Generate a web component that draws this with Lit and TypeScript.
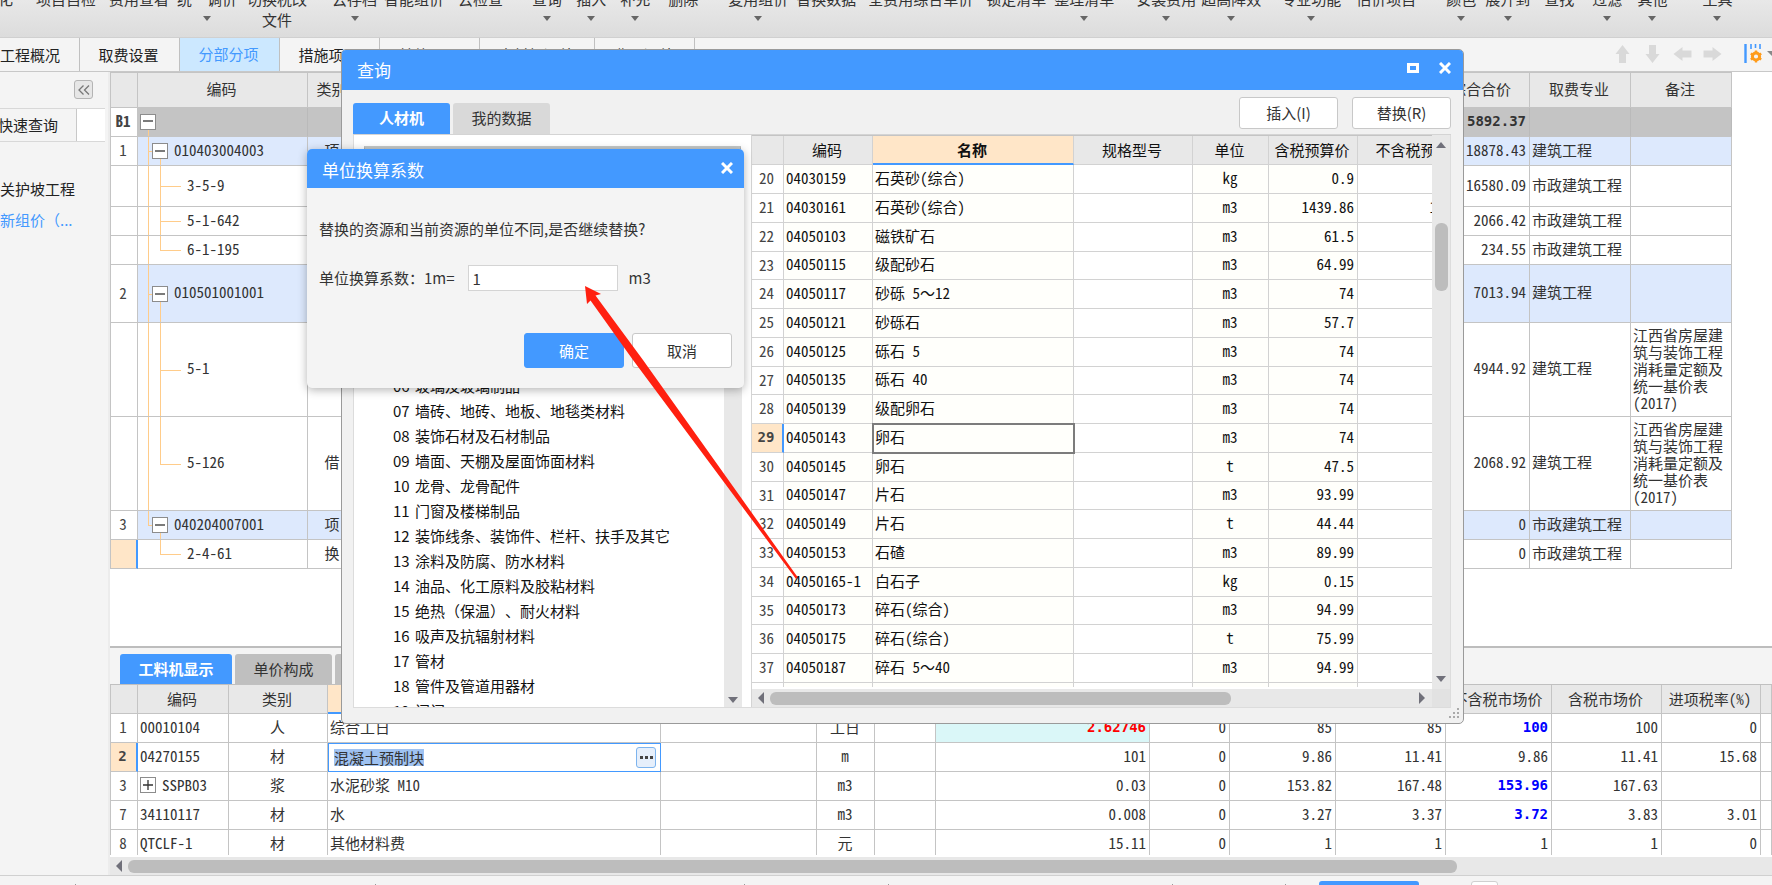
import { LitElement, html, css, svg, nothing } from "lit";
import { customElement, state } from "lit/decorators.js";
import { classMap } from "lit/directives/class-map.js";
import { styleMap } from "lit/directives/style-map.js";

interface Tool { label: string; gap: number; menu?: boolean; wrap?: boolean; }

const TOOLS: Tool[] = [
  { label: "化", gap: 0 },
  { label: "项目自检", gap: 23 },
  { label: "费用查看", gap: 13 },
  { label: "统一调价", gap: 8, menu: true },
  { label: "切换税改文件", gap: 10, wrap: true },
  { label: "云存档", gap: 25, menu: true },
  { label: "智能组价", gap: 7 },
  { label: "云检查", gap: 14 },
  { label: "查询", gap: 29, menu: true },
  { label: "插入", gap: 14, menu: true },
  { label: "补充", gap: 14, menu: true },
  { label: "删除", gap: 18 },
  { label: "复用组价", gap: 30, menu: true },
  { label: "替换数据", gap: 8 },
  { label: "全费用综合单价", gap: 12 },
  { label: "锁定清单", gap: 13 },
  { label: "整理清单", gap: 8, menu: true },
  { label: "安装费用", gap: 22, menu: true },
  { label: "超高降效", gap: 5, menu: true },
  { label: "专业功能", gap: 20, menu: true },
  { label: "估价项目", gap: 15 },
  { label: "颜色", gap: 30, menu: true },
  { label: "展开到", gap: 9, menu: true },
  { label: "查找", gap: 14 },
  { label: "过滤", gap: 18, menu: true },
  { label: "其他", gap: 15, menu: true },
  { label: "工具", gap: 35, menu: true },
];

const PAGES = ["工程概况", "取费设置", "分部分项", "措施项目", "其他项目", "人材机汇总", "费用汇总"];

/* Widths of the status bar sections, each closed by a divider. */
const SECTIONS = [76, 300, 369, 144, 284, 113];

interface Bill {
  no: string; code: string; kind: string; total: string; major: string;
  note?: string; level: number; size: string; last?: boolean; current?: boolean;
}

const NOTE = "江西省房屋建筑与装饰工程消耗量定额及统一基价表(2017)";

const BILLS: Bill[] = [
  { no: "B1", code: "", kind: "", total: "5892.37", major: "", level: 0, size: "h29" },
  { no: "1", code: "010403004003", kind: "项", total: "18878.43", major: "建筑工程", level: 1, size: "h29" },
  { no: "", code: "3-5-9", kind: "", total: "16580.09", major: "市政建筑工程", level: 2, size: "h41" },
  { no: "", code: "5-1-642", kind: "", total: "2066.42", major: "市政建筑工程", level: 2, size: "h29" },
  { no: "", code: "6-1-195", kind: "", total: "234.55", major: "市政建筑工程", level: 2, size: "h29", last: true },
  { no: "2", code: "010501001001", kind: "项", total: "7013.94", major: "建筑工程", level: 1, size: "h58" },
  { no: "", code: "5-1", kind: "", total: "4944.92", major: "建筑工程", note: NOTE, level: 2, size: "h94" },
  { no: "", code: "5-126", kind: "借", total: "2068.92", major: "建筑工程", note: NOTE, level: 2, size: "h94", last: true },
  { no: "3", code: "040204007001", kind: "项", total: "0", major: "市政建筑工程", level: 1, size: "h29", last: true },
  { no: "", code: "2-4-61", kind: "换", total: "0", major: "市政建筑工程", level: 2, size: "h29", last: true, current: true },
];

const MATERIALS: string[][] = [
  ["20", "04030159", "石英砂(综合)", "kg", "0.9", ""],
  ["21", "04030161", "石英砂(综合)", "m3", "1439.86", "1274.21"],
  ["22", "04050103", "磁铁矿石", "m3", "61.5", ""],
  ["23", "04050115", "级配砂石", "m3", "64.99", ""],
  ["24", "04050117", "砂砾 5～12", "m3", "74", ""],
  ["25", "04050121", "砂砾石", "m3", "57.7", ""],
  ["26", "04050125", "砾石 5", "m3", "74", ""],
  ["27", "04050135", "砾石 40", "m3", "74", ""],
  ["28", "04050139", "级配卵石", "m3", "74", ""],
  ["29", "04050143", "卵石", "m3", "74", ""],
  ["30", "04050145", "卵石", "t", "47.5", ""],
  ["31", "04050147", "片石", "m3", "93.99", ""],
  ["32", "04050149", "片石", "t", "44.44", ""],
  ["33", "04050153", "石碴", "m3", "89.99", ""],
  ["34", "04050165-1", "白石子", "kg", "0.15", ""],
  ["35", "04050173", "碎石(综合)", "m3", "94.99", ""],
  ["36", "04050175", "碎石(综合)", "t", "75.99", ""],
  ["37", "04050187", "碎石 5～40", "m3", "94.99", ""],
  ["", "", "", "", "", ""],
];

const CATEGORIES = [
  "06 玻璃及玻璃制品",
  "07 墙砖、地砖、地板、地毯类材料",
  "08 装饰石材及石材制品",
  "09 墙面、天棚及屋面饰面材料",
  "10 龙骨、龙骨配件",
  "11 门窗及楼梯制品",
  "12 装饰线条、装饰件、栏杆、扶手及其它",
  "13 涂料及防腐、防水材料",
  "14 油品、化工原料及胶粘材料",
  "15 绝热（保温）、耐火材料",
  "16 吸声及抗辐射材料",
  "17 管材",
  "18 管件及管道用器材",
  "19 阀门",
];

const RESOURCES: string[][] = [
  ["1", "00010104", "人", "综合工日", "工日", "2.62746", "0", "85", "85", "100", "100", "0"],
  ["2", "04270155", "材", "混凝土预制块", "m", "101", "0", "9.86", "11.41", "9.86", "11.41", "15.68"],
  ["3", "SSPB03", "浆", "水泥砂浆 M10", "m3", "0.03", "0", "153.82", "167.48", "153.96", "167.63", ""],
  ["7", "34110117", "材", "水", "m3", "0.008", "0", "3.27", "3.37", "3.72", "3.83", "3.01"],
  ["8", "QTCLF-1", "材", "其他材料费", "元", "15.11", "0", "1", "1", "1", "1", "0"],
];

const tri = (dir: string) => {
  const turn: Record<string, string> = { up: "5,0 10,6 0,6", down: "0,0 10,0 5,6", left: "6,0 6,12 0,6", right: "0,0 6,6 0,12" };
  const tall = dir === "left" || dir === "right";
  return html`<svg width=${tall ? 6 : 10} height=${tall ? 12 : 6} fill="#70707a" aria-hidden="true">${svg`<polygon points=${turn[dir]} />`}</svg>`;
};

@customElement("app-root")
export class AppRoot extends LitElement {
  @state() private factor = "1";

  static styles = css`
    :host {
      display: flex; flex-direction: column; height: 100vh; overflow: hidden; position: relative;
      font: 15px/20px "Noto Sans CJK SC", sans-serif; color: #333; background: #f4f4f4;
      text-spacing-trim: space-all;
    }
    * { box-sizing: border-box; }
    button, input { font: inherit; color: inherit; margin: 0; padding: 0; border: 0; }
    button { background: none; }
    svg { display: block; flex: none; }
    ul { list-style: none; margin: 0; padding: 0; }

    .toolbar {
      flex: none; display: flex; height: 38px; overflow: hidden; white-space: nowrap;
      background: linear-gradient(#e8e8e8, #dcdcdc); border-bottom: 1px solid #d0d0d0;
    }
    .tool { display: flex; flex-direction: column; align-items: center; flex: none; height: 42px; margin-top: -12px; line-height: 21px; }
    .tool:first-child { margin-left: -2px; }
    .tool.wrap { width: 60px; white-space: normal; }
    .tool svg { margin-top: 7px; }

    .pages { flex: none; display: flex; height: 34px; border-bottom: 1px solid #c8c8c8; background: #f4f4f4; }
    .page { flex: none; width: 100px; border-right: 1px solid #c0c0c0; color: #222; padding: 0 2px 0 0; }
    .page:first-child { width: 80px; text-align: left; }
    .page.wide { width: 115px; }
    .page.on { background: #cce8ff; color: #4399ff; padding-bottom: 2px; }
    .moves { margin-left: auto; display: flex; align-items: center; gap: 11px; padding-bottom: 2px; overflow: hidden; }
    .moves button { flex: none; }
    .moves .setup { display: flex; align-items: center; gap: 5px; margin: 0 -5px 0 11px; }

    .main { flex: 1; min-height: 0; display: flex; }
    .side { flex: none; width: 110px; background: #f4f4f4; padding-top: 8px; border-right: 2px solid #ececec; overflow: hidden; white-space: nowrap; }
    .fold { display: flex; align-items: center; justify-content: center; width: 19px; height: 19px; margin: 0 0 9px 74px; border: 1px solid #b4b4b4; border-radius: 3px; background: #e6e6e6; }
    .quick { display: flex; height: 34px; width: 105px; background: #fff; border-top: 1px solid #d8d8d8; border-bottom: 1px solid #d8d8d8; }
    .quick button { width: 79px; text-align: left; background: #f4f4f4; border-right: 1px solid #c8c8c8; color: #222; margin-left: -2px; }
    .outline { padding-top: 32px; color: #222; }
    .outline li { height: 31px; line-height: 30px; }
    .outline .soft { color: #4399ff; }

    .work { flex: 1; min-width: 0; display: flex; flex-direction: column; background: #fff; }
    .upper { flex: 1; min-height: 0; overflow: hidden; padding-right: 40px; }

    table { border-collapse: separate; border-spacing: 0; table-layout: fixed; width: 100%; font-family: "Noto Sans Mono CJK SC", "Noto Sans CJK SC", monospace; }
    th, td { padding: 0 3px; border-right: 1px solid #c4c4c4; border-bottom: 1px solid #c4c4c4; text-align: left; overflow: hidden; white-space: nowrap; line-height: 20px; }
    td { padding: 0 3px 3px 2px; }
    th { background: #e8e8e8; font-weight: 400; text-align: center; padding-right: 5px; }
    .num { text-align: right; }
    .mid { text-align: center; }
    tbody th { background: #fff; color: #444; padding: 0 2px 2px 0; }
    tbody th.picked { background: #ffe6c8; border-right: 2px solid #4399ff; }
    .heavy { font: 700 14px/20px "DejaVu Sans Mono", monospace; }

    .bills { border-left: 1px solid #c4c4c4; border-top: 1px solid #c4c4c4; }
    .bills thead th { height: 35px; padding-bottom: 2px; }
    .w27 { width: 27px; } .w32 { width: 32px; } .w50 { width: 50px; } .w58 { width: 58px; } .w61 { width: 61px; }
    .w76 { width: 76px; } .w80 { width: 80px; } .w89 { width: 89px; } .w91 { width: 91px; } .w95 { width: 95px; } .w99 { width: 99px; }
    .w101 { width: 101px; } .w106 { width: 106px; } .w110 { width: 110px; } .w119 { width: 119px; } .w128 { width: 128px; }
    .w156 { width: 156px; } .w170 { width: 170px; } .w201 { width: 201px; } .w214 { width: 214px; } .w11 { width: 11px; }
    .h29 td, .h29 th { height: 29px; }
    .h41 td { height: 41px; }
    .h58 td { height: 58px; }
    .h94 td { height: 94px; }
    .lv0 td { background: #c4c4c4; border-right-color: #bababa; }
    .lv1 td { background: #dde9fd; }
    td.note { white-space: normal; line-height: 17px; padding: 0 2px 2px 2px; }
    td.tree { padding: 0; position: relative; }
    .node { display: flex; align-items: center; position: absolute; inset: 0; }
    .node span:last-child { padding-bottom: 3px; }
    .node .box { padding: 0; }
    .box { flex: none; display: flex; align-items: center; justify-content: center; width: 16px; height: 16px; border: 1px solid #8c8c8c; background: #fff; z-index: 1; }
    .lv0 .node { padding-left: 2px; }
    .lv1 .node { padding-left: 14px; gap: 6px; }
    .lv2 .node { padding-left: 49px; }
    .rail { position: absolute; width: 0; top: 0; bottom: -1px; border-left: 1px solid #ffcc8a; }
    .outer { left: 10px; }
    .inner { left: 22px; }
    .rail.top { bottom: 50%; }
    .rail.low { top: 50%; }
    .stub { position: absolute; top: 50%; height: 0; border-top: 1px solid #ffcc8a; }
    .stub.near { left: 10px; width: 5px; }
    .stub.far { left: 22px; width: 21px; }

    .lower { flex: none; display: flex; flex-direction: column; background: #fff; border-top: 2px solid #bdbdbd; }
    .views { display: flex; gap: 3px; padding: 6px 0 0 10px; height: 37px; background: #f4f4f4; border-bottom: 1px solid #c0c0c0; }
    .view { flex: none; width: 97px; background: #bfbfbf; border-radius: 3px 3px 0 0; }
    .view.on { width: 112px; background: #4399ff; color: #fff; font-weight: 700; }
    .clip { height: 170px; overflow: hidden; border-left: 1px solid #c4c4c4; }
    .res thead th, .mats thead th { height: 29px; }
    .res tbody td, .res tbody th { height: 29px; }
    th.focus { background: #ffe6c8; border-bottom: 2px solid #4399ff; }
    .res .code { display: flex; align-items: center; gap: 6px; margin-bottom: -1px; }
    td.cyan { background: #daf7f8; color: #f00; }
    .blue { color: #00f; }
    td.edit { padding: 0; border: 1px solid #4399ff; }
    .editor { display: flex; align-items: center; justify-content: space-between; padding: 0 4px 0 5px; }
    .editor input { width: 90px; height: 17px; line-height: 17px; background: #9fc2f1; font-family: "Noto Sans CJK SC", sans-serif; }
    .more { display: flex; align-items: center; justify-content: center; width: 20px; height: 21px; border: 1px solid #7db4ee; border-radius: 3px; background: #e6effb; }

    .hbar { display: flex; align-items: center; height: 18px; background: #e8e8e8; padding: 0 7px 0 6px; gap: 6px; }
    .lower .hbar { margin-top: 2px; padding-right: 0; }
    .hbar .thumb { height: 13px; border-radius: 6px; background: #bdbdbd; }
    .hbar .right { margin-left: auto; }
    .t80 { width: 1329px; max-width: 82%; }
    .t70 { width: 461px; }
    .status { flex: none; display: flex; height: 10px; border-top: 1px solid #d0d0d0; background: #f4f4f4; overflow: hidden; padding-top: 5px; }
    .section { flex: none; height: 20px; margin-top: 3px; border-right: 1px solid #999; }
    .status .go { flex: none; width: 100px; height: 20px; margin: 0 52px 0 33px; border-radius: 3px; background: #4399ff; }
    .status .zoom { flex: none; width: 27px; height: 20px; border: 1px solid #d0d0d0; border-radius: 3px; background: #fff; }

    .window { position: absolute; display: flex; flex-direction: column; border-radius: 5px; background: #f1f1f1; overflow: hidden; }
    .title { flex: none; display: flex; align-items: center; color: #fff; background: #4399ff; font-size: 17px; height: 39px; margin: 0; font-weight: 400; padding: 2px 7px 0 15px; }
    .title span { flex: 1; }
    .title button { padding: 4px; }
    .title svg { margin-bottom: 4px; }
    .query { left: 341px; top: 49px; width: 1123px; height: 675px; border: 1px solid #9a9a9a; }
    .query .title { padding: 4px 8px 4px 15px; height: 40px; }
    .query .title .full { margin-right: 12px; }
    .head { flex: none; display: flex; gap: 3px; height: 45px; margin: 0 12px 0 11px; border-bottom: 1px solid #d4d4d4; align-items: flex-end; }
    .head .tab { width: 97px; height: 31px; background: #d9d9d9; border-radius: 3px 3px 0 0; padding-bottom: 2px; }
    .head .tab.on { background: #4399ff; color: #fff; font-weight: 700; }
    .btn { width: 100px; height: 32px; background: #fff; border: 1px solid #c8c8c8; border-radius: 3px; }
    .head .btn { width: 99px; align-self: flex-start; margin: 7px 0 0 11px; }
    .head .btn.push { margin-left: auto; }
    .split { flex: 1; min-height: 0; display: flex; margin: 0 12px 15px 11px; border: 1px solid #dcdcdc; border-top: 0; }
    .cats { flex: none; width: 398px; background: #fff; display: flex; padding-right: 9px; border-right: 1px solid #d4d4d4; overflow: hidden; }
    .list { flex: 1; min-width: 0; display: flex; flex-direction: column; justify-content: space-between; padding: 11px 0 0 10px; margin-bottom: -16px; color: #111; white-space: nowrap; }
    .pick { height: 26px; border: 1px solid #a8a8a8; border-top: 3px solid #c4c8c8; margin-right: -17px; }
    .list ul { padding-left: 29px; }
    .list li { display: flex; height: 25px; line-height: 25px; }
    .list li span { width: 22px; }
    .vbar { flex: none; display: flex; flex-direction: column; align-items: center; justify-content: space-between; width: 18px; background: #e8e8e8; padding: 7px 0; }
    .cats .vbar { margin-top: 40px; justify-content: flex-end; padding-bottom: 4px; }
    .sheet { flex: 1; min-width: 0; display: grid; grid-template-columns: minmax(0, 1fr) 18px; grid-template-rows: minmax(0, 1fr) 18px; background: #fff; }
    .sheet .hold { overflow: hidden; border-top: 1px solid #c4c4c4; margin-bottom: 2px; }
    .sheet .vbar .thumb { width: 13px; height: 68px; border-radius: 6px; background: #bdbdbd; margin-top: 75px; }
    .sheet .vbar .low { margin-top: auto; }
    .corner { background: #e2e2e2; }
    .mats { width: 734px; color: #111; }
    .mats td, .mats th { border-color: #d2d2d2; height: 29px; }
    .mats tr:nth-child(4n) td, .mats tr:nth-child(4n) th { height: 28px; }
    .mats td { background: #fffffb; }
    .mats td.plain { background: #fff; }
    .mats th.focus { border-bottom-color: #4399ff; font-weight: 700; }
    .mats th.picked { border-right-color: #4399ff; }
    .mats td.active { outline: 2px solid #7c7c7c; outline-offset: -1px; }
    .grip { position: absolute; right: 3px; bottom: 4px; }

    .factor { left: 307px; top: 149px; width: 437px; height: 239px; background: #f4f4f4; box-shadow: 0 2px 10px rgba(0, 0, 0, 0.3); }
    .factor .body { flex: 1; display: flex; flex-direction: column; padding: 31px 12px 20px; }
    .factor p { margin: 0; line-height: 20px; }
    .line { display: flex; align-items: center; margin-top: 26px; height: 26px; }
    .line input { width: 150px; height: 26px; border: 1px solid #d4d4d4; background: #fff; padding: 0 4px; margin: 0 11px 0 13px; }
    .acts { display: flex; gap: 8px; justify-content: flex-end; margin-top: auto; }
    .acts .btn { height: 35px; }
    .acts .main-act { background: #4399ff; border-color: #4399ff; color: #fff; }
    .pointer { position: absolute; left: 580px; top: 280px; pointer-events: none; }
  `;

  private caret() {
    return html`<svg width="8" height="5" aria-hidden="true"><polygon points="0,0 8,0 4,5" fill="#666" /></svg>`;
  }

  private closeIcon() {
    return html`<svg width="12" height="12" aria-hidden="true"><path d="M1 1L11 11M11 1L1 11" stroke="#fff" stroke-width="3" /></svg>`;
  }

  private box(plus: boolean) {
    return html`<span class="box"><svg width="10" height="10"><path d=${plus ? "M0 5H10M5 0V10" : "M0 5H10"} stroke="#333" stroke-width="1.3" /></svg></span>`;
  }

  private node(b: Bill) {
    const lastGroup = b.code === "2-4-61";
    return html`<div class="node">
      ${b.level === 0 ? html`<i class="rail outer low"></i>` : nothing}
      ${b.level === 1 ? html`<i class="rail outer ${b.last ? "top" : ""}"></i><i class="stub near"></i><i class="rail inner low"></i>` : nothing}
      ${b.level === 2 ? html`${lastGroup ? nothing : html`<i class="rail outer"></i>`}<i class="rail inner ${b.last ? "top" : ""}"></i><i class="stub far"></i>` : nothing}
      ${b.level < 2 ? this.box(false) : nothing}
      ${b.code ? html`<span>${b.code}</span>` : nothing}
    </div>`;
  }

  private arrow(dir: number, label: string) {
    return html`<button aria-label=${label}><svg width="19" height="20" viewBox="-9.5 -10 19 20">
      <path transform="rotate(${dir})" d="M0 -9L7 0H3.5V9H-3.5V0H-7Z" fill="#d9d9d9" /></svg></button>`;
  }

  private toolbar() {
    return html`<header class="toolbar">
      ${TOOLS.map((t) => html`<button class=${classMap({ tool: true, wrap: !!t.wrap })} style=${styleMap(t.gap ? { marginLeft: `${t.gap}px` } : {})}>
        <span>${t.label}</span>${t.menu ? this.caret() : nothing}</button>`)}
    </header>`;
  }

  private pages() {
    return html`<nav class="pages">
      ${PAGES.map((p) => html`<button class=${classMap({ page: true, on: p === "分部分项", wide: p.length > 4 })}>${p}</button>`)}
      <div class="moves">
        ${this.arrow(0, "上移")}${this.arrow(180, "下移")}${this.arrow(270, "左移")}${this.arrow(90, "右移")}
        <button class="setup" aria-label="列设置">
          <svg width="18" height="20"><path d="M1.5 0V19" stroke="#4399ff" stroke-width="2.4" />
            <path d="M7 0V5M11.500 0V4M16 0V5" stroke="#4399ff" stroke-width="1.6" />
            <circle cx="12" cy="12.500" r="3.600" fill="none" stroke="#ff9c1c" stroke-width="3" />
            <path d="M12 6.500V9M12 16V18.500M6.800 9.500L9 11M15 14L17.200 15.500M17.200 9.500L15 11M6.800 15.500L9 14" stroke="#ff9c1c" stroke-width="2.400" /></svg>
          <svg width="10" height="6"><polygon points="0,0 10,0 5,5" fill="#888" /></svg>
        </button>
      </div>
    </nav>`;
  }

  private bills() {
    return html`<div class="upper"><table class="bills">
      <thead><tr>
        <th class="w27"></th><th class="w170">编码</th><th class="w50">类别</th><th></th>
        <th class="w95">综合合价</th><th class="w101">取费专业</th><th class="w101">备注</th>
      </tr></thead>
      <tbody>${BILLS.map((b) => html`<tr class="${b.size} lv${b.level}">
        <th class=${classMap({ picked: !!b.current })}>${b.level === 0 ? html`<b>${b.no}</b>` : b.no}</th>
        <td class="tree">${this.node(b)}</td>
        <td class="mid">${b.kind}</td><td></td>
        <td class=${classMap({ num: true, heavy: b.level === 0 })}>${b.total}</td>
        <td>${b.major}</td><td class="note">${b.note ?? ""}</td>
      </tr>`)}</tbody>
    </table></div>`;
  }

  private resources() {
    return html`<section class="lower">
      <div class="views"><button class="view on">工料机显示</button><button class="view">单价构成</button><button class="view" aria-label="更多"></button></div>
      <div class="clip"><table class="res">
        <thead><tr>
          <th class="w27"></th><th class="w91">编码</th><th class="w99">类别</th><th class="focus"></th><th class="w156"></th>
          <th class="w58"></th><th class="w61"></th><th class="w214"></th><th class="w80"></th><th class="w106"></th><th class="w110"></th>
          <th class="w106">不含税市场价</th><th class="w110">含税市场价</th><th class="w99">进项税率(%)</th><th class="w11"></th>
        </tr></thead>
        <tbody>${RESOURCES.map((r, i) => html`<tr>
          <th class=${classMap({ picked: i === 1, heavy: i === 1 })}>${r[0]}</th>
          <td>${i === 2 ? html`<div class="code">${this.box(true)}${r[1]}</div>` : r[1]}</td>
          <td class="mid">${r[2]}</td>
          ${i === 1
            ? html`<td class="edit"><div class="editor"><input aria-label="名称" .value=${r[3]} />
                <button class="more" aria-label="选择"><svg width="13" height="3" fill="#444"><rect width="3" height="3" /><rect x="5" width="3" height="3" /><rect x="10" width="3" height="3" /></svg></button></div></td>`
            : html`<td>${r[3]}</td>`}
          <td></td><td class="mid">${r[4]}</td><td></td>
          <td class=${classMap({ num: true, cyan: i === 0, heavy: i === 0 })}>${r[5]}</td>
          <td class="num">${r[6]}</td><td class="num">${r[7]}</td><td class="num">${r[8]}</td>
          <td class=${classMap({ num: true, heavy: i === 0 || i === 2 || i === 3, blue: i === 0 || i === 2 || i === 3 })}>${r[9]}</td>
          <td class="num">${r[10]}</td><td class="num">${r[11]}</td><td></td>
        </tr>`)}</tbody>
      </table></div>
      <div class="hbar">${tri("left")}<div class="thumb t80"></div></div>
    </section>`;
  }

  private query() {
    return html`<section class="window query" role="dialog" aria-label="查询">
      <h2 class="title"><span>查询</span>
        <button class="full" aria-label="最大化"><svg width="12" height="10"><rect x="1.500" y="1.500" width="9" height="7" fill="none" stroke="#fff" stroke-width="3" /></svg></button>
        <button aria-label="关闭">${this.closeIcon()}</button></h2>
      <div class="head"><button class="tab on">人材机</button><button class="tab">我的数据</button>
        <button class="btn push">插入(I)</button><button class="btn">替换(R)</button></div>
      <div class="split">
        <div class="cats">
          <div class="list"><div class="pick"></div><ul>${CATEGORIES.map((c) => html`<li><span>${c.slice(0, 2)}</span>${c.slice(3)}</li>`)}</ul></div>
          <div class="vbar">${tri("down")}</div>
        </div>
        <div class="sheet">
          <div class="hold"><table class="mats">
            <thead><tr><th class="w32"></th><th class="w89">编码</th><th class="w201 focus">名称</th><th class="w119">规格型号</th><th class="w76">单位</th><th class="w89">含税预算价</th><th class="w128">不含税预算价</th></tr></thead>
            <tbody>${MATERIALS.map((m) => {
              const on = m[0] === "29";
              return html`<tr><th class=${classMap({ picked: on, heavy: on })}>${m[0]}</th><td>${m[1]}</td>
                <td class=${classMap({ active: on })}>${m[2]}</td><td class="plain"></td><td class="mid">${m[3]}</td>
                <td class="num">${m[4]}</td><td class="num plain">${m[5]}</td></tr>`;
            })}</tbody>
          </table></div>
          <div class="vbar">${tri("up")}<div class="thumb"></div><div class="low">${tri("down")}</div></div>
          <div class="hbar">${tri("left")}<div class="thumb t70"></div><div class="right">${tri("right")}</div></div>
          <div class="corner"></div>
        </div>
      </div>
      <svg class="grip" width="11" height="11" fill="#aaa"><rect x="8" width="2" height="2" /><rect x="4" y="4" width="2" height="2" /><rect x="8" y="4" width="2" height="2" /><rect y="8" width="2" height="2" /><rect x="4" y="8" width="2" height="2" /><rect x="8" y="8" width="2" height="2" /></svg>
    </section>`;
  }

  private unitFactor() {
    return html`<section class="window factor" role="dialog" aria-label="单位换算系数">
      <h2 class="title"><span>单位换算系数</span><button aria-label="关闭">${this.closeIcon()}</button></h2>
      <div class="body">
        <p>替换的资源和当前资源的单位不同,是否继续替换?</p>
        <div class="line"><label for="factor">单位换算系数：1m=</label>
          <input id="factor" .value=${this.factor} @input=${(e: Event) => (this.factor = (e.target as HTMLInputElement).value)} /><span>m3</span></div>
        <div class="acts"><button class="btn main-act">确定</button><button class="btn">取消</button></div>
      </div>
    </section>`;
  }

  render() {
    return html`
      ${this.toolbar()}${this.pages()}
      <div class="main">
        <aside class="side">
          <button class="fold" aria-label="收起"><svg width="12" height="10"><path d="M5.500 0.500L1 5L5.500 9.500M11 0.500L6.500 5L11 9.500" fill="none" stroke="#777" stroke-width="1.300" /></svg></button>
          <div class="quick"><button>快速查询</button></div>
          <ul class="outline"><li>关护坡工程</li><li class="soft">新组价（...</li></ul>
        </aside>
        <div class="work">${this.bills()}${this.resources()}</div>
      </div>
      <footer class="status">
        ${SECTIONS.map((w) => html`<div class="section" style=${styleMap({ width: `${w}px` })}></div>`)}
        <button class="go" aria-label="客服"></button><button class="zoom" aria-label="缩放"></button>
      </footer>
      ${this.query()}${this.unitFactor()}
      <svg class="pointer" width="220" height="300" aria-hidden="true"><path d="M5 6L21 14L15.500 15.500L63 80L217.500 297L216 299L53 80L10.500 20.500L7 24Z" fill="#ff2010" /></svg>
    `;
  }
}
